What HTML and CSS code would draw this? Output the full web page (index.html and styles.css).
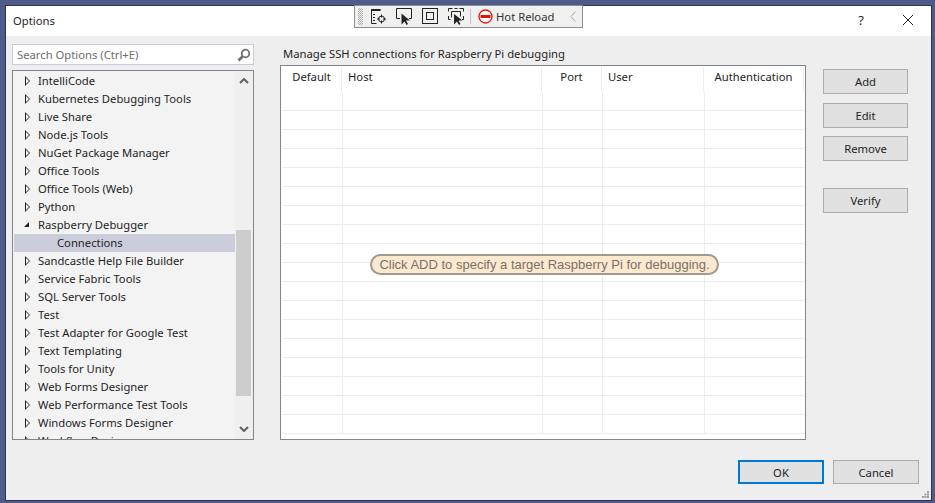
FILE: index.html
```html
<!DOCTYPE html>
<html lang="en">
<head>
    <meta charset="UTF-8">
    <meta name="viewport" content="width=device-width, initial-scale=1.0">
    <title>Options</title>
    <link rel="stylesheet" href="styles.css">
</head>
<body>
    <div class="dialog">
        <header class="titlebar">
            <span class="title">Options</span>
            <span class="help">?</span>
            <svg class="close" width="12" height="12" viewBox="0 0 12 12"><path d="M1 1l10 10M11 1L1 11" stroke="#222" fill="none"/></svg>
        </header>

        <!-- debug toolbar floats over the title bar -->
        <div class="debugbar">
            <span class="grip"></span>
            <svg class="tool tool-first" width="17" height="17" viewBox="0 0 17 17" fill="none" stroke="#222">
                <path d="M10.500 1.500h-9v14h5"/><path d="M1.500 2h9" stroke-width="2"/><path d="M3 6.500h2M3 9.500h2M3 12.500h2"/>
                <circle cx="11.500" cy="11" r="3"/><path d="M11.500 6.500v3M11.500 12.500v3M7 11h3M13 11h3"/>
            </svg>
            <svg class="tool" width="17" height="17" viewBox="0 0 17 17" fill="none" stroke="#222">
                <path d="M4 10.500H.5V.5h15v10H13"/><path d="M5.500 5.500v11l3-3 2 3.500 1.500-1-2-3.500h4z" fill="#222" stroke="none"/>
            </svg>
            <svg class="tool" width="17" height="17" viewBox="0 0 17 17" fill="none" stroke="#222">
                <rect x=".5" y=".5" width="15" height="15"/><rect x="4.500" y="4.500" width="7" height="7"/>
            </svg>
            <svg class="tool" width="17" height="17" viewBox="0 0 17 17" fill="none" stroke="#222">
                <path d="M.5 3.500v-3h4M11.500 .5h4v3M.5 8v3.500h2M15.500 8v3.500H14M6.500 .5h3M3.500 3.500h9v5"/><path d="M3.500 3.500v6" /><path d="M6 6v10.500l3-3 2 3.500 1.500-1-2-3.500h4z" fill="#222" stroke="none"/>
            </svg>
            <span class="sep"></span>
            <svg class="stop" width="15" height="15" viewBox="0 0 15 15">
                <circle cx="7.500" cy="7.500" r="6.500" fill="#fff" stroke="#e51400" stroke-width="1.300"/>
                <rect x="2.500" y="6" width="10" height="3" fill="#e51400"/>
            </svg>
            <span class="hot">Hot Reload</span>
            <svg class="collapse" width="6" height="11" viewBox="0 0 6 11"><path d="M5.500 .5L1 5.500l4.500 5" fill="none" stroke="#a8a8a8"/></svg>
        </div>

        <div class="content">
            <aside class="left">
                <div class="search">
                    <span>Search Options (Ctrl+E)</span>
                    <svg width="14" height="14" viewBox="0 0 14 14" fill="none" stroke="#707070">
                        <circle cx="8.500" cy="5.500" r="3.800" stroke-width="1.800"/><path d="M5.500 8.500L1.500 12.500" stroke-width="2.600"/>
                    </svg>
                </div>
                <div class="tree">
                    <ul class="nodes">
                        <li class="node">IntelliCode</li>
                        <li class="node">Kubernetes Debugging Tools</li>
                        <li class="node">Live Share</li>
                        <li class="node">Node.js Tools</li>
                        <li class="node">NuGet Package Manager</li>
                        <li class="node">Office Tools</li>
                        <li class="node">Office Tools (Web)</li>
                        <li class="node">Python</li>
                        <li class="node open">Raspberry Debugger</li>
                        <li class="node child selected">Connections</li>
                        <li class="node">Sandcastle Help File Builder</li>
                        <li class="node">Service Fabric Tools</li>
                        <li class="node">SQL Server Tools</li>
                        <li class="node">Test</li>
                        <li class="node">Test Adapter for Google Test</li>
                        <li class="node">Text Templating</li>
                        <li class="node">Tools for Unity</li>
                        <li class="node">Web Forms Designer</li>
                        <li class="node">Web Performance Test Tools</li>
                        <li class="node">Windows Forms Designer</li>
                        <li class="node">Workflow Designer</li>
                    </ul>
                    <div class="scrollbar">
                        <svg class="chev" width="10" height="6" viewBox="0 0 10 6"><path d="M1 5l4-4 4 4" fill="none" stroke="#606060" stroke-width="2"/></svg>
                        <div class="thumb"></div>
                        <svg class="chev" width="10" height="6" viewBox="0 0 10 6"><path d="M1 1l4 4 4-4" fill="none" stroke="#606060" stroke-width="2"/></svg>
                    </div>
                </div>
            </aside>

            <main class="right">
                <p class="heading">Manage SSH connections for Raspberry Pi debugging</p>
                <div class="panel-row">
                    <div class="table">
                        <div class="thead">
                            <div class="th c-default">Default</div>
                            <div class="th c-host">Host</div>
                            <div class="th c-port">Port</div>
                            <div class="th c-user">User</div>
                            <div class="th c-auth">Authentication</div>
                        </div>
                        <div class="tbody">
                            <div class="td c-default"></div>
                            <div class="td c-host"></div>
                            <div class="td c-port"></div>
                            <div class="td c-user"></div>
                            <div class="td c-auth"></div>
                        </div>
                        <div class="hint">Click ADD to specify a target Raspberry Pi for debugging.</div>
                    </div>
                    <div class="actions">
                        <button type="button" class="add">Add</button>
                        <button type="button">Edit</button>
                        <button type="button">Remove</button>
                        <button type="button" class="verify">Verify</button>
                    </div>
                </div>
            </main>
        </div>

        <footer class="buttons">
            <button type="button" class="primary">OK</button>
            <button type="button">Cancel</button>
            <svg class="resize" width="7" height="7" viewBox="0 0 7 7" fill="#a0a0a0">
                <rect x="5" y="0" width="2" height="2"/><rect x="2.500" y="2.500" width="2" height="2"/><rect x="5" y="2.500" width="2" height="2"/>
                <rect x="0" y="5" width="2" height="2"/><rect x="2.500" y="5" width="2" height="2"/><rect x="5" y="5" width="2" height="2"/>
            </svg>
        </footer>
    </div>
</body>
</html>
```

FILE: styles.css
```css
* {
    box-sizing: border-box;
}
html, body {
    height: 100%;
}
body {
    margin: 0;
    background-color: #4f5b8a;
    font-family: "Noto Sans", sans-serif;
    font-size: 11.25px;
    color: #1e1e1e;
    overflow: hidden;
}
.dialog {
    position: relative;
    width: 927px;
    height: 496px;
    margin: 5px 0 0 5px;
    background-color: #eeeeee;
    border: 1px solid #2c3350;
    display: flex;
    flex-direction: column;
}
.titlebar {
    height: 30px;
    flex: none;
    background-color: #fff;
    display: flex;
    align-items: center;
    padding: 0 17px 2px 7px;
}
.title {
    flex: 1;
}
.help {
    font-size: 13px;
    margin-right: 38px;
}
.debugbar {
    position: absolute;
    left: 348px;
    top: -1px;
    width: 229px;
    height: 23px;
    background-color: #f0f0f0;
    border: 1px solid #8d8d8d;
    display: flex;
    align-items: center;
    padding-left: 3px;
}
.grip {
    width: 5px;
    height: 17px;
    background-image: repeating-conic-gradient(#b0b0b0 0 25%, transparent 0 50%);
    background-size: 2px 2px;
}
.tool {
    margin-left: 9px;
    flex: none;
}
.tool-first {
    margin-left: 7px;
}
.sep {
    width: 1px;
    height: 15px;
    background-color: #c4c4c4;
    margin: 0 7px 0 5px;
}
.stop {
    flex: none;
}
.hot {
    margin-left: 3px;
    color: #333;
    white-space: nowrap;
}
.collapse {
    margin-left: 16px;
    flex: none;
}
.content {
    flex: 1;
    display: flex;
    padding: 8px 0 0 6px;
    min-height: 0;
}
.left {
    width: 242px;
    flex: none;
}
.search {
    height: 21px;
    background-color: #fff;
    border: 1px solid #c9cbdc;
    display: flex;
    align-items: center;
    justify-content: space-between;
    padding: 0 2px 0 4px;
    color: #6d6d6d;
}
.tree {
    margin-top: 5px;
    height: 370px;
    border: 1px solid #84848c;
    background-color: #f3f3f3;
    display: flex;
    overflow: hidden;
}
.nodes {
    list-style: none;
    margin: 0;
    padding: 1px 0 0 1px;
    flex: 1;
    overflow: hidden;
}
.node {
    height: 18px;
    line-height: 18px;
    padding-left: 24px;
    position: relative;
    white-space: nowrap;
}
.node::before {
    content: "";
    position: absolute;
    left: 11px;
    top: 4px;
    border-style: solid;
    border-width: 5px 0 5px 5px;
    border-color: transparent transparent transparent #222;
}
.node::after {
    content: "";
    position: absolute;
    left: 12px;
    top: 6px;
    border-style: solid;
    border-width: 3px 0 3px 3px;
    border-color: transparent transparent transparent #f3f3f3;
}
.node.open::before {
    left: 10px;
    top: 6px;
    border-width: 0 0 5px 5px;
    border-color: transparent transparent #222 transparent;
}
.node.open::after,
.node.child::before,
.node.child::after {
    display: none;
}
.node.child {
    padding-left: 43px;
}
.selected {
    margin-right: -1px;
    background-color: #cbcdda;
}
.scrollbar {
    width: 18px;
    flex: none;
    background-color: #efefef;
    position: relative;
    display: flex;
    flex-direction: column;
    align-items: center;
    justify-content: space-between;
    padding: 7px 1px 7px 0;
}
.thumb {
    position: absolute;
    left: 1px;
    right: 2px;
    top: 159px;
    height: 166px;
    background-color: #cdcdcd;
}
.right {
    flex: 1;
    padding-left: 26px;
    display: flex;
    flex-direction: column;
}
.heading {
    margin: 0;
    height: 21px;
    line-height: 19px;
    padding-left: 3px;
}
.panel-row {
    display: flex;
}
.table {
    position: relative;
    width: 526px;
    height: 375px;
    background-color: #fff;
    border: 1px solid #84848c;
    padding: 1px;
}
.thead {
    display: flex;
    height: 25px;
}
.th {
    line-height: 20px;
    border-right: 1px solid #ececec;
}
.c-default { width: 60px; text-align: center; }
.c-host { width: 200px; padding-left: 6px; }
.c-port { width: 60px; text-align: center; }
.c-user { width: 102px; padding-left: 6px; }
.c-auth { width: 100px; text-align: center; }
.tbody {
    display: flex;
    height: 342px;
    background-image: repeating-linear-gradient(to bottom, transparent 0, transparent 18px, #ececec 18px, #ececec 19px);
}
.td {
    border-right: 1px solid #ececec;
}
.td.c-default { width: 61px; }
.td.c-auth {
    border-right: 0;
    width: 99px;
}
.hint {
    position: absolute;
    left: 89px;
    top: 188px;
    width: 349px;
    height: 21px;
    border: 2px solid #a09a90;
    border-radius: 11px;
    background-color: #fde9cf;
    color: #7a7068;
    font-family: "Liberation Sans", Arial, sans-serif;
    font-size: 13px;
    line-height: 17px;
    text-align: center;
    white-space: nowrap;
}
.actions {
    margin-left: 17px;
    margin-top: 4px;
    display: flex;
    flex-direction: column;
    gap: 8px;
}
button {
    width: 85px;
    height: 25px;
    padding: 0;
    background-color: #e1e1e1;
    border: 1px solid #adadad;
    font-family: inherit;
    font-size: 11.25px;
    color: #1e1e1e;
}
.add {
    margin-bottom: 1px;
}
.verify {
    margin-top: 19px;
}
.buttons {
    flex: none;
    height: 59px;
    position: relative;
    display: flex;
    justify-content: flex-end;
    gap: 9px;
    padding: 19px 12px 0 0;
}
.buttons button {
    width: 86px;
    height: 24px;
}
.buttons .primary {
    border: 2px solid #0078d7;
}
.resize {
    position: absolute;
    right: 2px;
    bottom: 2px;
}
```
